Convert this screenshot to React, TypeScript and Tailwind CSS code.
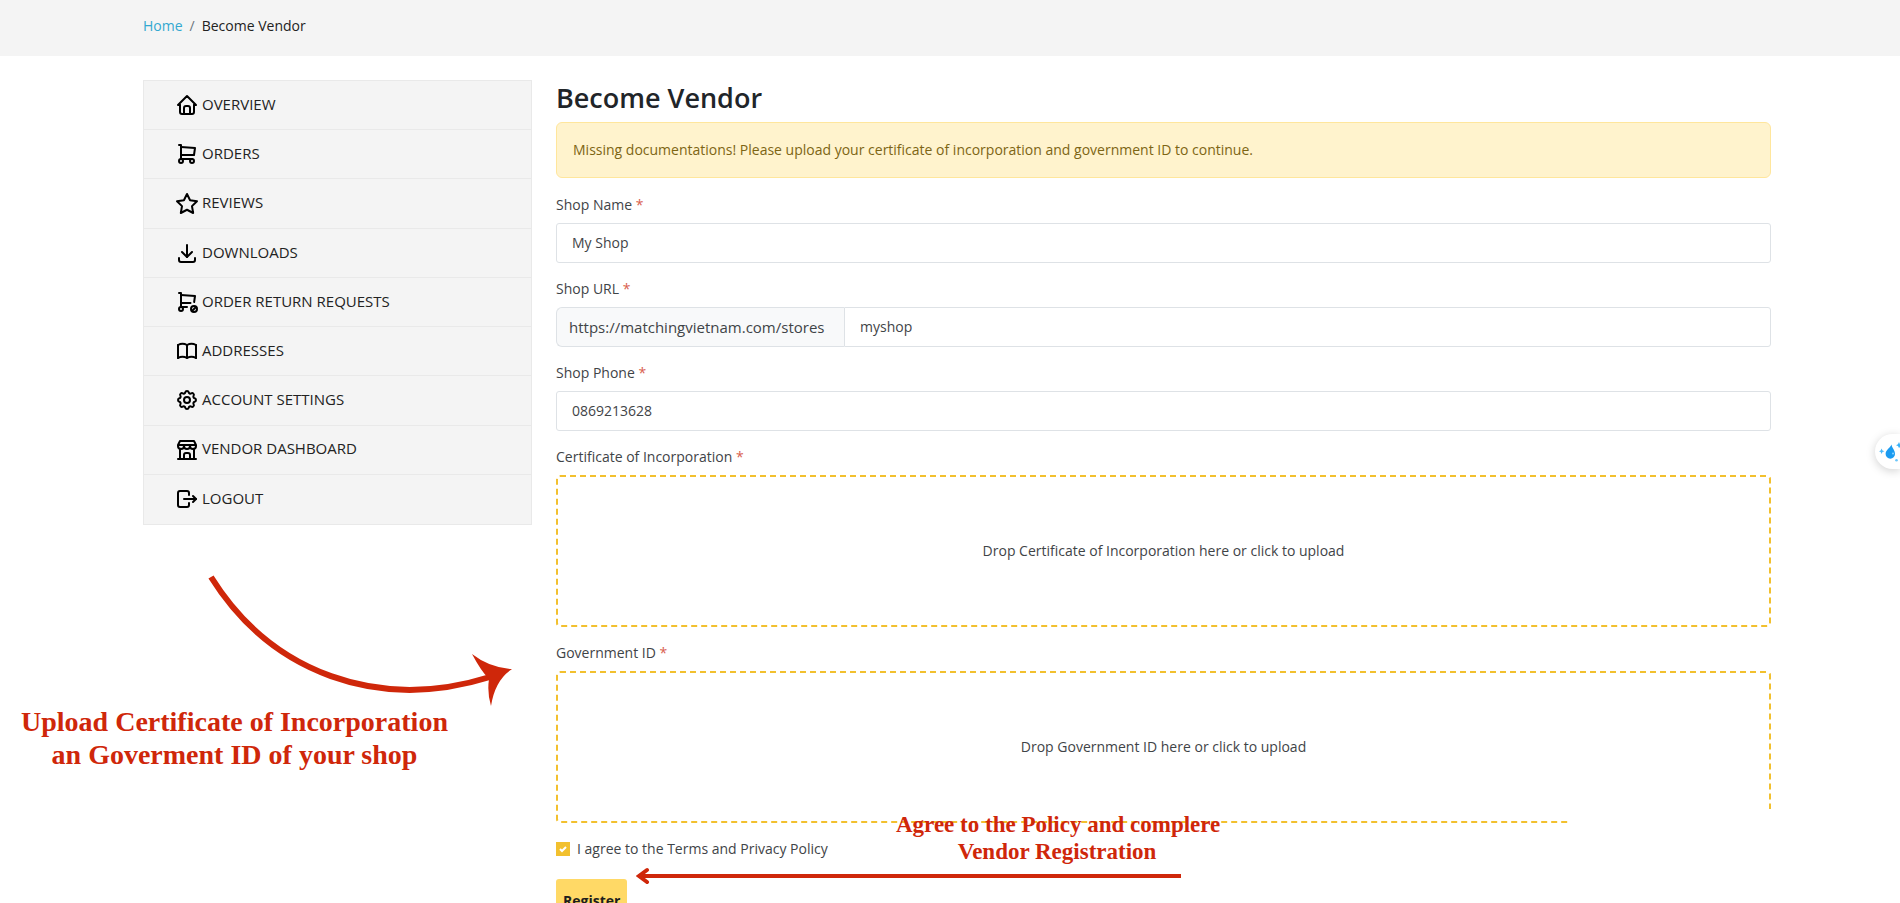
import type { ReactNode } from "react";
import type { IconType } from "react-icons";
import {
  TbBook,
  TbBuildingStore,
  TbDownload,
  TbHome,
  TbLogout,
  TbSettings,
  TbShoppingCart,
  TbShoppingCartCancel,
  TbStar,
} from "react-icons/tb";

const menu: { label: string; icon: IconType }[] = [
  { label: "Overview", icon: TbHome },
  { label: "Orders", icon: TbShoppingCart },
  { label: "Reviews", icon: TbStar },
  { label: "Downloads", icon: TbDownload },
  { label: "Order Return Requests", icon: TbShoppingCartCancel },
  { label: "Addresses", icon: TbBook },
  { label: "Account Settings", icon: TbSettings },
  { label: "Vendor Dashboard", icon: TbBuildingStore },
  { label: "Logout", icon: TbLogout },
];

const inputClass =
  "h-10 w-full border border-[#dee2e6] bg-white px-[15px] pb-[2px] text-sm text-[#3f4447] outline-none";

function Field({ id, label, children }: { id: string; label: string; children: ReactNode }) {
  return (
    <div className="mb-4">
      <label htmlFor={id} className="mb-2 block text-sm text-[#3f4447]">
        {label} <span className="text-[#d9604f]">*</span>
      </label>
      {children}
    </div>
  );
}

function Dropzone({ id, text }: { id: string; text: string }) {
  return (
    <label
      htmlFor={id}
      className="flex h-38 cursor-pointer items-center justify-center rounded-[4px] border-2 border-dashed border-[#f2c02e] text-sm text-[#3f4447]"
    >
      {text}
      <input id={id} type="file" className="sr-only" />
    </label>
  );
}

function Sidebar() {
  return (
    <nav>
      <ul className="grid h-[445px] auto-rows-fr divide-y divide-[#e9e9e9] border border-[#e9e9e9] bg-[#f4f4f4]">
        {menu.map(({ label, icon: Icon }) => (
          <li key={label}>
            <a href="#" className="flex h-full items-center gap-[3px] pl-[31px] text-[15px] text-[#222] uppercase">
              <Icon className="size-6 text-black" />
              <span className="pb-[2px]">{label}</span>
            </a>
          </li>
        ))}
      </ul>
    </nav>
  );
}

function VendorForm() {
  return (
    <form className="col-span-3">
      <h1 className="text-[27px] leading-9 font-semibold text-[#212529]">Become Vendor</h1>
      <div className="mt-1.5 mb-[17px] rounded-md border border-[#ffe69c] bg-[#fff3cd] px-4 py-[17px] text-sm text-[#7d6514]">
        Missing documentations! Please upload your certificate of incorporation and government ID to continue.
      </div>

      <Field id="shop-name" label="Shop Name">
        <input id="shop-name" type="text" defaultValue="My Shop" className={`${inputClass} rounded-[3px]`} />
      </Field>

      <Field id="shop-url" label="Shop URL">
        <div className="flex">
          <span className="flex w-[288px] items-center rounded-l-md border border-r-0 border-[#dee2e6] bg-[#f8f9fa] px-3 text-[15px] text-[#3f4447]">
            https://matchingvietnam.com/stores
          </span>
          <input id="shop-url" type="text" defaultValue="myshop" className={`${inputClass} flex-1 rounded-r-[3px]`} />
        </div>
      </Field>

      <Field id="shop-phone" label="Shop Phone">
        <input id="shop-phone" type="tel" defaultValue="0869213628" className={`${inputClass} rounded-[3px]`} />
      </Field>

      <Field id="certificate" label="Certificate of Incorporation">
        <Dropzone id="certificate" text="Drop Certificate of Incorporation here or click to upload" />
      </Field>

      <Field id="government-id" label="Government ID">
        <div className="relative">
          <Dropzone id="government-id" text="Drop Government ID here or click to upload" />
          {/* White patch over the bottom right corner */}
          <div className="absolute right-0 bottom-0 h-[14px] w-[201px] bg-white" />
        </div>
      </Field>

      <div className="mb-5 flex items-center gap-[7px]">
        <span className="relative size-[14px]">
          <input id="agree" type="checkbox" defaultChecked className="block size-[14px] appearance-none bg-[#f2c02e]" />
          <svg viewBox="0 0 14 14" className="pointer-events-none absolute inset-0" fill="none" stroke="#fff" strokeWidth="2">
            <path d="M4 7l2 2 4-4" />
          </svg>
        </span>
        <label htmlFor="agree" className="text-sm text-[#3f4447]">
          I agree to the Terms and Privacy Policy
        </label>
      </div>

      <button type="submit" className="h-11 rounded-[3px] bg-[#ffd966] px-[7px] text-sm font-bold text-[#1d1d1d]">
        Register
      </button>
    </form>
  );
}

function Annotations() {
  return (
    <div className="pointer-events-none absolute inset-0 font-['Liberation_Serif',serif] font-bold text-[#cf270a]">
      <svg width="310" height="140" viewBox="205 570 310 140" className="absolute top-[570px] left-[205px]">
        <path d="M211 577C271 673 378 712 490 677" fill="none" stroke="#cf270a" strokeWidth="6" />
        <path d="M472 654Q490 668 512 669Q495 680 491 706Q487 693 489 679Q481 671 472 654Z" fill="#cf270a" />
      </svg>
      <p className="absolute top-[705px] left-[21px] w-[427px] text-center text-[28px] leading-[33px] whitespace-nowrap">
        Upload Certificate of Incorporation
        <br />
        an Goverment ID of your shop
      </p>

      <p className="absolute top-[811px] left-[896px] w-[322px] text-center text-[23px] leading-[27px] whitespace-nowrap">
        Agree to the Policy and complere
        <br />
        Vendor Registration
      </p>
      <svg width="546" height="20" viewBox="636 866 546 20" className="absolute top-[866px] left-[636px]">
        <path d="M640 876H1181" stroke="#cf270a" strokeWidth="4" />
        <path d="M647 870L639 876L647 882" fill="none" stroke="#cf270a" strokeWidth="4" strokeLinecap="round" />
      </svg>
    </div>
  );
}

function FloatingButton() {
  return (
    <button
      type="button"
      aria-label="Assistant"
      className="absolute top-[434px] right-0 h-[35px] w-[25px] rounded-l-full bg-white shadow-[0_2px_10px_rgba(0,0,0,0.18)]"
    >
      <svg width="25" height="35" viewBox="0 0 25 35" fill="#1b9bf0">
        <path d="M16.5 10.5C17 14 20 16 20 20A4.7 4.7 0 0 1 10.6 20C10.6 16 15 14 16.5 10.5Z" />
        <path d="M6.5 14.5L7.5 16.5L9.5 17.2L7.5 18L6.5 20L5.7 18L4 17.2L5.7 16.5Z" fill="#4bb8f8" />
        <path d="M24 8L25 10.5V13L24 14L23 12L21 11.2L23 10.2Z" fill="#35b1fa" />
        <circle cx="21.5" cy="26.3" r="1.3" fill="#6cc6fa" />
        <circle cx="18" cy="19.5" r="1" fill="#8ed6ff" />
      </svg>
    </button>
  );
}

export default function App() {
  return (
    <div className="relative h-screen overflow-hidden bg-white font-['Open_Sans',sans-serif]">
      <header className="flex h-14 items-center bg-[#f4f4f4] pr-[129px] pb-1 pl-[143px] text-sm">
        <a href="#" className="text-[#33a8d0]">Home</a>
        <span className="px-[7px] text-[#6c757d]">/</span>
        <span className="text-[#222]">Become Vendor</span>
      </header>

      <main className="grid grid-cols-4 items-start gap-6 pt-6 pr-[129px] pl-[143px]">
        <Sidebar />
        <VendorForm />
      </main>

      <Annotations />
      <FloatingButton />
    </div>
  );
}
